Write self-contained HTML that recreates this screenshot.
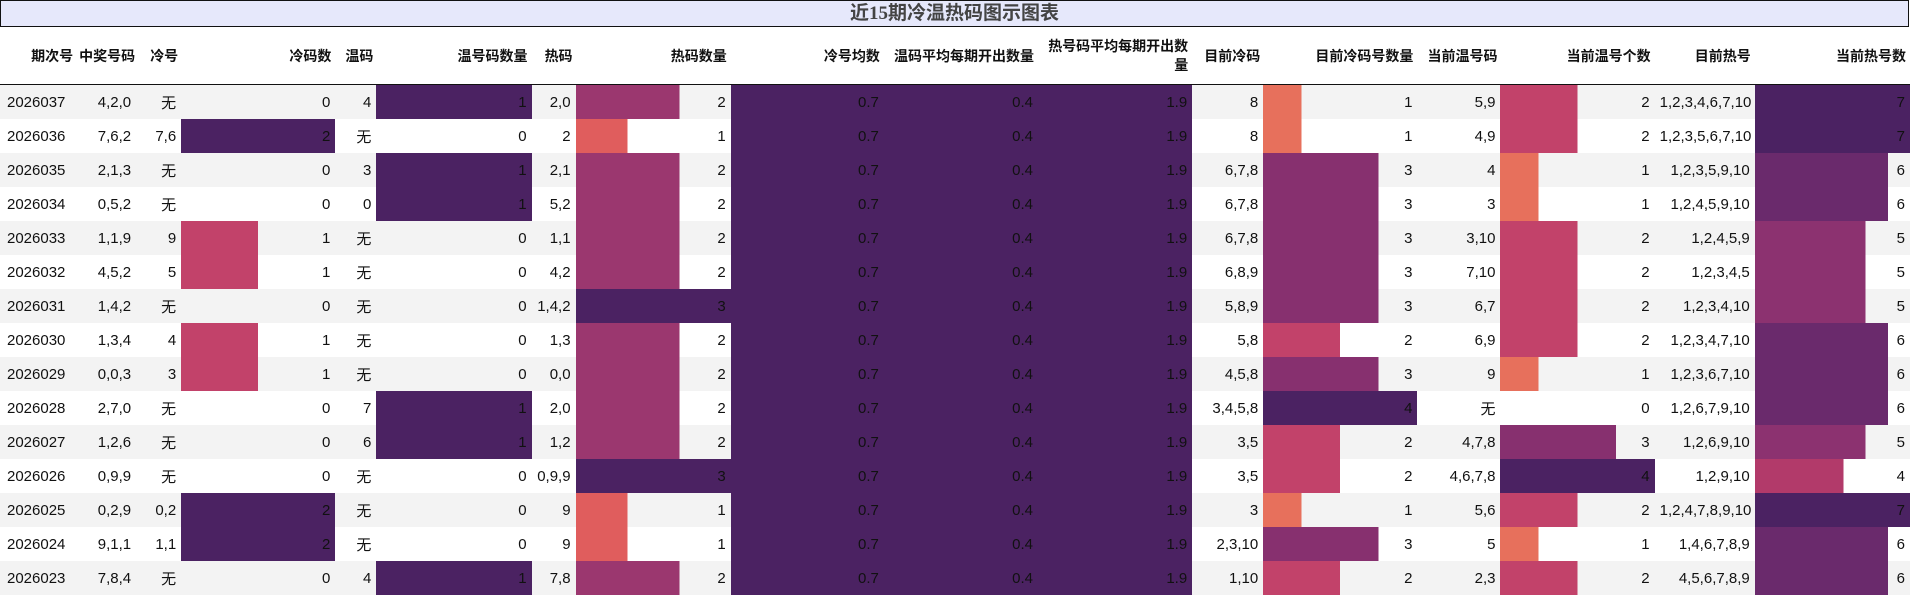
<!DOCTYPE html>
<html><head><meta charset="utf-8"><style>
body{margin:0;width:1910px;height:596px;background:#fff;overflow:hidden;font-family:"Liberation Sans Narrow","Liberation Sans","Noto Sans CJK SC",sans-serif;}
.title{position:absolute;left:0;top:0;width:1907px;height:25px;background:#e6e8fb;border:1.5px solid #111;text-align:center;font-family:"Liberation Serif","Noto Sans CJK SC",serif;font-size:19px;font-weight:bold;line-height:25px;color:#444;}
table{position:absolute;left:0;top:28px;border-collapse:collapse;table-layout:fixed;width:1910px;}
th{height:56px;font-size:14px;font-weight:bold;text-align:right;padding:0 4px;border-bottom:1.5px solid #111;font-family:"Liberation Sans","Noto Sans CJK SC",sans-serif;color:#111;line-height:19px;}
th.nw{white-space:nowrap;padding:0 3px}
td{height:34px;padding:0 5px;text-align:right;font-size:15px;color:#111;white-space:nowrap;background-repeat:no-repeat;}
td:first-child{text-align:left;padding-left:7px}
tr.o td{background-color:#f3f3f3}
</style></head><body>
<div class="title">近15期冷温热码图示图表</div>
<table>
<colgroup><col style="width:76px"><col style="width:60px"><col style="width:45px"><col style="width:154px"><col style="width:41px"><col style="width:155px"><col style="width:44px"><col style="width:155px"><col style="width:153px"><col style="width:154px"><col style="width:154px"><col style="width:71px"><col style="width:154px"><col style="width:83px"><col style="width:154px"><col style="width:100px"><col style="width:155px"></colgroup>
<tr><th class="nw">期次号</th><th class="nw">中奖号码</th><th class="nw">冷号</th><th>冷码数</th><th class="nw">温码</th><th>温号码数量</th><th class="nw">热码</th><th>热码数量</th><th>冷号均数</th><th>温码平均每期开出数量</th><th>热号码平均每期开出数量</th><th class="nw">目前冷码</th><th>目前冷码号数量</th><th class="nw">当前温号码</th><th>当前温号个数</th><th>目前热号</th><th>当前热号数</th></tr>
<tbody id="b"></tbody>
</table>
<script>
var D=[
["2026037","4,2,0","无",0,"4",1,"2,0",2,"8",1,"5,9",2,"1,2,3,4,6,7,10",7],
["2026036","7,6,2","7,6",2,"无",0,"2",1,"8",1,"4,9",2,"1,2,3,5,6,7,10",7],
["2026035","2,1,3","无",0,"3",1,"2,1",2,"6,7,8",3,"4",1,"1,2,3,5,9,10",6],
["2026034","0,5,2","无",0,"0",1,"5,2",2,"6,7,8",3,"3",1,"1,2,4,5,9,10",6],
["2026033","1,1,9","9",1,"无",0,"1,1",2,"6,7,8",3,"3,10",2,"1,2,4,5,9",5],
["2026032","4,5,2","5",1,"无",0,"4,2",2,"6,8,9",3,"7,10",2,"1,2,3,4,5",5],
["2026031","1,4,2","无",0,"无",0,"1,4,2",3,"5,8,9",3,"6,7",2,"1,2,3,4,10",5],
["2026030","1,3,4","4",1,"无",0,"1,3",2,"5,8",2,"6,9",2,"1,2,3,4,7,10",6],
["2026029","0,0,3","3",1,"无",0,"0,0",2,"4,5,8",3,"9",1,"1,2,3,6,7,10",6],
["2026028","2,7,0","无",0,"7",1,"2,0",2,"3,4,5,8",4,"无",0,"1,2,6,7,9,10",6],
["2026027","1,2,6","无",0,"6",1,"1,2",2,"3,5",2,"4,7,8",3,"1,2,6,9,10",5],
["2026026","0,9,9","无",0,"无",0,"0,9,9",3,"3,5",2,"4,6,7,8",4,"1,2,9,10",4],
["2026025","0,2,9","0,2",2,"无",0,"9",1,"3",1,"5,6",2,"1,2,4,7,8,9,10",7],
["2026024","9,1,1","1,1",2,"无",0,"9",1,"2,3,10",3,"5",1,"1,4,6,7,8,9",6],
["2026023","7,8,4","无",0,"4",1,"7,8",2,"1,10",2,"2,3",2,"4,5,6,7,8,9",6]];
var DK="#4b2262";
function bar(v,max,cmap){if(!v)return "";var p=v/max*100;return ' style="background-image:linear-gradient(90deg,'+cmap[v]+' 0,'+cmap[v]+' '+p+'%,transparent '+p+'%)"';}
var c1={1:"#c2426a",2:DK},cw={1:DK},ch={1:"#e05d5d",2:"#9b376f",3:DK},c4={1:"#e7705c",2:"#c2426a",3:"#87306f",4:DK},c7={4:"#b23a6a",5:"#8c3270",6:"#6a2a6c",7:DK};
var full=' style="background-color:'+DK+'"';
var h="";
D.forEach(function(r,i){
h+='<tr'+(i%2==0?' class="o"':'')+'>'+
'<td>'+r[0]+'</td><td>'+r[1]+'</td><td>'+r[2]+'</td>'+
'<td'+bar(r[3],2,c1)+'>'+r[3]+'</td><td>'+r[4]+'</td>'+
'<td'+bar(r[5],1,cw)+'>'+r[5]+'</td><td>'+r[6]+'</td>'+
'<td'+bar(r[7],3,ch)+'>'+r[7]+'</td>'+
'<td'+full+'>0.7</td><td'+full+'>0.4</td><td'+full+'>1.9</td>'+
'<td>'+r[8]+'</td><td'+bar(r[9],4,c4)+'>'+r[9]+'</td><td>'+r[10]+'</td>'+
'<td'+bar(r[11],4,c4)+'>'+r[11]+'</td><td>'+r[12]+'</td>'+
'<td'+bar(r[13],7,c7)+'>'+r[13]+'</td></tr>';
});
document.getElementById("b").innerHTML=h;
</script>
</body></html>
